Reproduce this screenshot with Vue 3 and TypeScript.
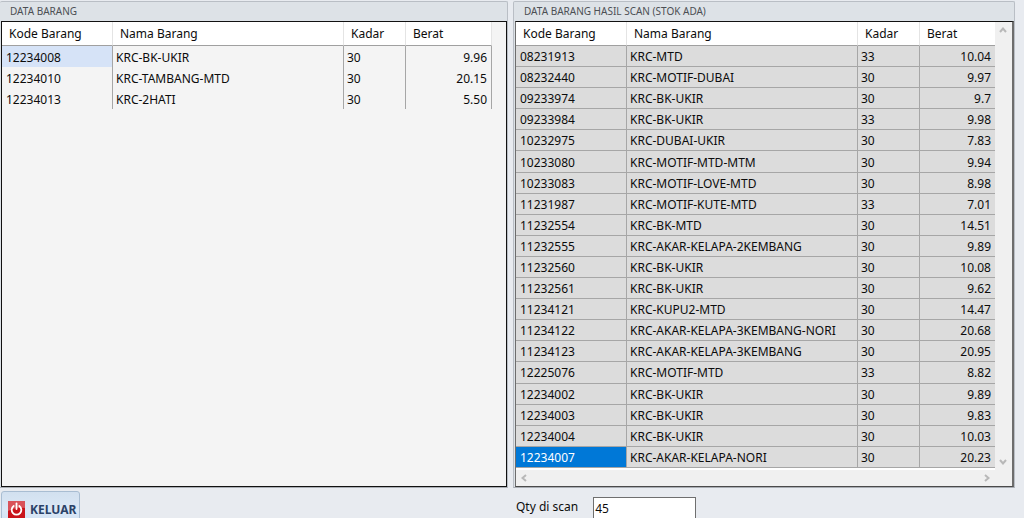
<script setup lang="ts">
import { ref } from 'vue'

interface Item {
  kode: string
  nama: string
  kadar: string
  berat: string
}

const toItem = ([kode, nama, kadar, berat]: string[]): Item => ({ kode, nama, kadar, berat })

const stock: Item[] = [
  ['12234008', 'KRC-BK-UKIR', '30', '9.96'],
  ['12234010', 'KRC-TAMBANG-MTD', '30', '20.15'],
  ['12234013', 'KRC-2HATI', '30', '5.50'],
].map(toItem)

const scanned: Item[] = [
  ['08231913', 'KRC-MTD', '33', '10.04'],
  ['08232440', 'KRC-MOTIF-DUBAI', '30', '9.97'],
  ['09233974', 'KRC-BK-UKIR', '30', '9.7'],
  ['09233984', 'KRC-BK-UKIR', '33', '9.98'],
  ['10232975', 'KRC-DUBAI-UKIR', '30', '7.83'],
  ['10233080', 'KRC-MOTIF-MTD-MTM', '30', '9.94'],
  ['10233083', 'KRC-MOTIF-LOVE-MTD', '30', '8.98'],
  ['11231987', 'KRC-MOTIF-KUTE-MTD', '33', '7.01'],
  ['11232554', 'KRC-BK-MTD', '30', '14.51'],
  ['11232555', 'KRC-AKAR-KELAPA-2KEMBANG', '30', '9.89'],
  ['11232560', 'KRC-BK-UKIR', '30', '10.08'],
  ['11232561', 'KRC-BK-UKIR', '30', '9.62'],
  ['11234121', 'KRC-KUPU2-MTD', '30', '14.47'],
  ['11234122', 'KRC-AKAR-KELAPA-3KEMBANG-NORI', '30', '20.68'],
  ['11234123', 'KRC-AKAR-KELAPA-3KEMBANG', '30', '20.95'],
  ['12225076', 'KRC-MOTIF-MTD', '33', '8.82'],
  ['12234002', 'KRC-BK-UKIR', '30', '9.89'],
  ['12234003', 'KRC-BK-UKIR', '30', '9.83'],
  ['12234004', 'KRC-BK-UKIR', '30', '10.03'],
  ['12234007', 'KRC-AKAR-KELAPA-NORI', '30', '20.23'],
].map(toItem)

const selectedStock = ref('12234008')
const selectedScan = ref('12234007')
const qty = ref('45')
</script>

<template>
  <main class="page">
    <div class="panels">
      <section class="panel">
        <h2 class="title">DATA BARANG</h2>
        <div class="list">
          <table class="grid plain">
            <colgroup>
              <col class="c-kode" /><col class="c-nama" /><col class="c-kadar" /><col class="c-berat" />
            </colgroup>
            <thead>
              <tr><th>Kode Barang</th><th>Nama Barang</th><th>Kadar</th><th>Berat</th></tr>
            </thead>
            <tbody>
              <tr v-for="item in stock" :key="item.kode" @click="selectedStock = item.kode">
                <td :class="{ selected: item.kode === selectedStock }">{{ item.kode }}</td>
                <td>{{ item.nama }}</td>
                <td>{{ item.kadar }}</td>
                <td class="num">{{ item.berat }}</td>
              </tr>
            </tbody>
          </table>
        </div>
      </section>

      <section class="panel scan">
        <h2 class="title">DATA BARANG HASIL SCAN (STOK ADA)</h2>
        <div class="list scrolling">
          <div class="view">
            <table class="grid lined">
              <colgroup>
                <col class="c-kode" /><col class="c-nama" /><col class="c-kadar" /><col />
              </colgroup>
              <thead>
                <tr><th>Kode Barang</th><th>Nama Barang</th><th>Kadar</th><th>Berat</th></tr>
              </thead>
              <tbody>
                <tr v-for="item in scanned" :key="item.kode" @click="selectedScan = item.kode">
                  <td :class="{ selected: item.kode === selectedScan }">{{ item.kode }}</td>
                  <td>{{ item.nama }}</td>
                  <td>{{ item.kadar }}</td>
                  <td class="num">{{ item.berat }}</td>
                </tr>
              </tbody>
            </table>
          </div>
          <div class="bar vertical">
            <button type="button" aria-label="Scroll up">
              <svg width="8" height="6" viewBox="0 0 8 6"><path d="M1 5 4 1.5 7 5" /></svg>
            </button>
            <button type="button" aria-label="Scroll down">
              <svg width="8" height="6" viewBox="0 0 8 6"><path d="M1 1 4 4.5 7 1" /></svg>
            </button>
          </div>
          <div class="bar horizontal">
            <button type="button" aria-label="Scroll left">
              <svg width="6" height="8" viewBox="0 0 6 8"><path d="M5 1 1.5 4 5 7" /></svg>
            </button>
            <button type="button" aria-label="Scroll right">
              <svg width="6" height="8" viewBox="0 0 6 8"><path d="M1 1 4.5 4 1 7" /></svg>
            </button>
          </div>
        </div>
      </section>
    </div>

    <footer class="footer">
      <div class="actions">
        <button type="button" class="exit">
          <svg width="17" height="17" viewBox="0 0 17 17" aria-hidden="true">
            <rect width="17" height="17" fill="#c9141b" />
            <path d="M0 0H17V7Q8 6 0 10Z" fill="#d9525a" />
            <path d="M5.7 5A4.8 4.8 0 1 0 11.3 5" fill="none" stroke="#fff" stroke-width="1.8" stroke-linecap="round" />
            <path d="M8.5 2.5V8" stroke="#fff" stroke-width="1.8" stroke-linecap="round" />
          </svg>
          <span>KELUAR</span>
        </button>
      </div>
      <div class="qty">
        <label for="qty">Qty di scan</label>
        <input id="qty" v-model="qty" type="text" />
      </div>
    </footer>
  </main>
</template>

<style>
body {
  margin: 0;
  background: #e8ebf0;
}
</style>

<style scoped>
.page {
  box-sizing: border-box;
  display: flex;
  flex-direction: column;
  height: 100vh;
  overflow: hidden;
  padding-top: 1px;
  background: #e8ebf0;
  color: #0c0c0c;
  font: 12px/20px "Noto Sans", "Open Sans", sans-serif;
}

.panels,
.footer {
  display: grid;
  grid-template-columns: 508fr 502fr;
  gap: 5px;
  padding-right: 9px;
}

.panels {
  flex: 1;
  min-height: 0;
}

.panel {
  display: flex;
  flex-direction: column;
  min-width: 0;
  min-height: 0;
  box-sizing: border-box;
  border: 1px solid #b9bec5;
  border-bottom-color: #a9adb3;
  border-radius: 2px 2px 0 0;
  background: #dde2e7;
}

.title {
  margin: 0;
  padding-left: 9px;
  color: #4c4f54;
  font: 400 10px/19px "Noto Sans", "Open Sans", sans-serif;
}

.scan .title {
  padding-left: 10px;
}

.list {
  flex: 1;
  min-height: 0;
  border: 1px solid #111;
  background: #f4f4f4;
}

.panel:not(.scan) {
  border-left: 0;
  padding-left: 1px;
}

.scan .list {
  margin-left: 1px;
  border-color: #111 #6d6d6d #4a4a4a #6d6d6d;
  border-right-width: 2px;
}

.scrolling {
  display: grid;
  grid-template: minmax(0, 1fr) 16px / minmax(0, 1fr) 17px;
  background: #f0f0f0;
}

.view {
  overflow: hidden;
  padding-bottom: 2px;
  background: #fff;
}

.grid {
  border-collapse: separate;
  border-spacing: 0;
  table-layout: fixed;
  width: 100%;
}

.plain {
  width: 490px;
}

.lined {
  height: 100%;
}

.c-kode { width: 111px; }
.c-nama { width: 231px; }
.c-kadar { width: 62px; }

th {
  box-sizing: border-box;
  height: 24px;
  padding: 0 7px;
  border-right: 1px solid #e4e4e4;
  border-bottom: 1px solid #a0a0a0;
  background: #fff;
  font-weight: 400;
  text-align: left;
}

td {
  padding: 2px 3px 0;
  overflow: hidden;
  border-right: 1px solid #a6a6a6;
  line-height: 18px;
  white-space: nowrap;
}

td:first-child {
  padding-left: 4px;
}

td:last-child {
  padding-right: 4px;
}

.plain td {
  box-sizing: border-box;
  height: 21px;
}

.lined td {
  border-bottom: 1px solid #a6a6a6;
  background: #dcdcdc;
}

.lined th:last-child,
.lined td:last-child {
  border-right: 0;
}

.num {
  text-align: right;
}

.plain .selected {
  background: #d6e3f7;
}

.lined .selected {
  background: #0078d7;
  color: #fff;
}

.bar {
  display: flex;
  justify-content: space-between;
}

.vertical {
  flex-direction: column;
}

.bar button {
  display: grid;
  place-items: center;
  width: 16px;
  height: 16px;
  padding: 0;
  border: 0;
  background: none;
}

.bar path {
  fill: none;
  stroke: #b8b8b8;
  stroke-width: 2;
}

.footer {
  height: 30px;
}

.actions {
  padding: 3px 0 0 1px;
}

.exit {
  display: flex;
  align-items: center;
  gap: 5px;
  height: 37px;
  padding: 0 3px 0 6px;
  border: 1px solid #a9bdd2;
  border-radius: 3px;
  background: linear-gradient(#d2e0ef, #dce8f6 50%, #cddff3);
  color: #2b4268;
  font: 700 12px/20px "Noto Sans", "Open Sans", sans-serif;
}

.qty {
  display: flex;
  align-items: flex-start;
  gap: 15px;
  padding: 9px 0 0 3px;
}

.qty input {
  box-sizing: border-box;
  width: 103px;
  height: 22px;
  padding: 0 1px;
  border: 1px solid #6f6f6f;
  border-radius: 0;
  background: #fff;
  color: inherit;
  font: inherit;
}
</style>
